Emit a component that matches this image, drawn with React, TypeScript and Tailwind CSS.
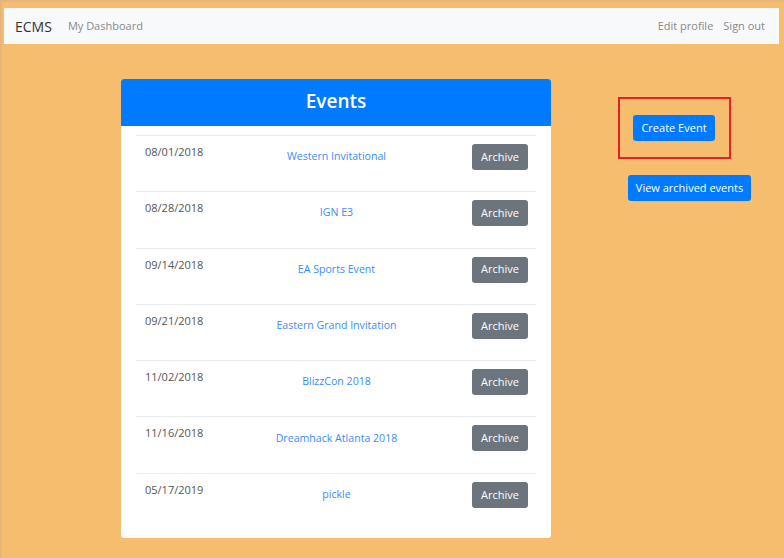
import React from "react";

const events = [
  { date: "08/01/2018", name: "Western Invitational" },
  { date: "08/28/2018", name: "IGN E3" },
  { date: "09/14/2018", name: "EA Sports Event" },
  { date: "09/21/2018", name: "Eastern Grand Invitation" },
  { date: "11/02/2018", name: "BlizzCon 2018" },
  { date: "11/16/2018", name: "Dreamhack Atlanta 2018" },
  { date: "05/17/2019", name: "pickle" },
];

const App = () => {
  return <div className="w-[784px] h-[558px] overflow-hidden bg-[#f6bd6e] border-t-2 border-l-2 border-[#e5b57c] pt-[6px] pl-[2px] pr-[5px] font-['Open_Sans','Noto_Sans',sans-serif]">
      <nav className="h-[36px] bg-[#f8f9fa] flex items-center pl-[11px] pr-[14px]">
        <span className="text-[14px] text-[#333]">ECMS</span>
        <span className="ml-[16px] text-[11px] text-[#8a8a8a]">My Dashboard</span>
        <div className="ml-auto flex gap-[10px] text-[11px] text-[#8a8a8a]">
          <span>Edit profile</span>
          <span>Sign out</span>
        </div>
      </nav>
      <div className="flex items-start pt-[35px]">
        <div className="ml-[117px] w-[430px] bg-white rounded-[3px] overflow-hidden">
          <div className="h-[47px] bg-[#007bff] flex items-center justify-center">
            <h1 className="text-white text-[19px] font-semibold -mt-[2px]">Events</h1>
          </div>
          <div className="px-[15px] pt-[9px] pb-[9px]">
            {events.map(e => <div key={e.date} className="h-[56.3px] border-t border-[#e9ecef] grid grid-cols-3 pl-[9px] pr-[8px] pt-[8px]">
                <div className="text-[11px] leading-[16px] text-[#555]">{e.date}</div>
                <div className="h-[26px] flex items-center justify-center text-[10.6px] text-[#3b8cf7] whitespace-nowrap">{e.name}</div>
                <div className="flex justify-end">
                  <button className="h-[26px] w-[56px] rounded-[3px] bg-[#6c757d] text-white text-[11px]">Archive</button>
                </div>
              </div>)}
          </div>
        </div>
        <div className="ml-[67px] mt-[18px] flex flex-col items-start">
          <div className="border-2 border-[#e5202a] pl-[13px] pr-[14px] pt-[15px] pb-[16px]">
            <button className="h-[26px] w-[82px] rounded-[3px] bg-[#007bff] text-white text-[11px]">Create Event</button>
          </div>
          <button className="mt-[16px] ml-[10px] h-[26px] w-[123px] rounded-[3px] bg-[#007bff] text-white text-[11px]">View archived events</button>
        </div>
      </div>
    </div>;
};

export default App;
